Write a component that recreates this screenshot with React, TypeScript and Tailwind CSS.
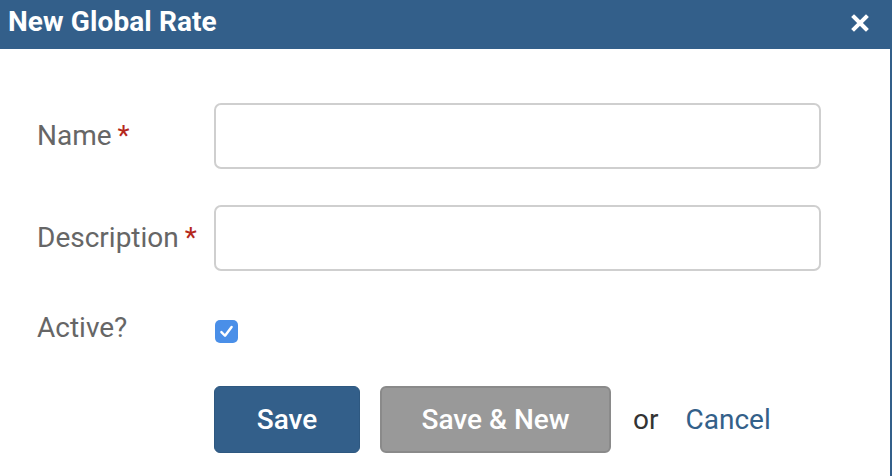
export default function App() {
  return (
    <div className="w-[892px] h-[476px] overflow-hidden bg-white flex flex-col font-['Roboto',sans-serif]">
      <div className="h-[49px] shrink-0 bg-[#335f8a] flex items-center justify-between pl-[8px] pr-[23px] pb-[6px]">
        <h1 className="text-white text-[28px] font-bold tracking-[0.1px]">New Global Rate</h1>
        <svg width="18" height="18" viewBox="0 0 18 18" className="mt-[2px]">
          <path d="M3 3 L15 15 M15 3 L3 15" stroke="white" strokeWidth="4" strokeLinecap="square" />
        </svg>
      </div>
      <div className="flex-1 border-r-[2px] border-[#335f8a] pl-[37px] pt-[54px]">
        <div className="flex items-center h-[66px]">
          <label className="w-[177px] text-[28px] text-[#666]">
            Name<span className="text-[#b5281c] ml-[6px]">*</span>
          </label>
          <input className="w-[607px] h-[66px] border-[2px] border-[#cfcfcf] rounded-[7px] outline-none" />
        </div>
        <div className="flex items-center h-[66px] mt-[36px]">
          <label className="w-[177px] text-[28px] text-[#666]">
            Description<span className="text-[#b5281c] ml-[6px]">*</span>
          </label>
          <input className="w-[607px] h-[66px] border-[2px] border-[#cfcfcf] rounded-[7px] outline-none" />
        </div>
        <div className="flex items-center h-[50px] mt-[35px]">
          <label className="w-[178px] text-[28px] text-[#666] -mt-[6px]">Active?</label>
          <span className="w-[23px] h-[23px] rounded-[5px] bg-[#4a8fe8] flex items-center justify-center">
            <svg width="17" height="17" viewBox="0 0 16 16">
              <path d="M3.2 8.6 L6.6 12 L12.8 3.8" stroke="white" strokeWidth="2.3" fill="none" strokeLinecap="round" strokeLinejoin="round" />
            </svg>
          </span>
        </div>
        <div className="flex items-center mt-[30px] pl-[177px]">
          <button className="w-[146px] h-[67px] rounded-[6px] bg-[#335f8a] border border-[#2e5880] text-white text-[28px] font-medium">
            Save
          </button>
          <button className="ml-[20px] w-[231px] h-[67px] rounded-[6px] bg-[#999999] border-[2px] border-[#8a8a8a] text-white text-[28px] font-medium">
            Save &amp; New
          </button>
          <span className="ml-[22px] text-[28px] text-[#333]">or</span>
          <a className="ml-[27px] text-[28px] text-[#336089]">Cancel</a>
        </div>
      </div>
    </div>
  );
}
